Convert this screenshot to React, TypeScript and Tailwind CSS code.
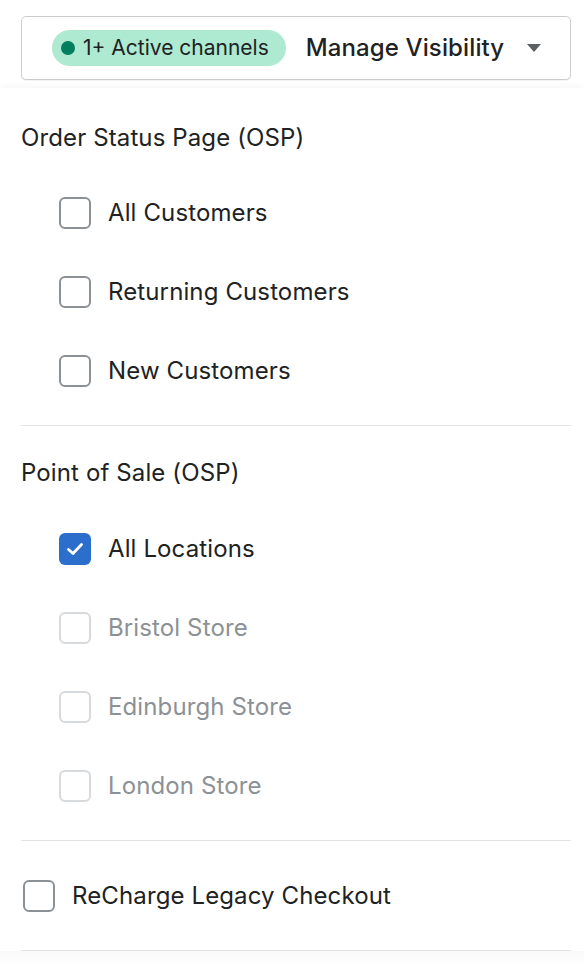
import React from "react";

type Option = { label: string; checked?: boolean; disabled?: boolean };

const ospOptions: Option[] = [
  { label: "All Customers" },
  { label: "Returning Customers" },
  { label: "New Customers" },
];

const posOptions: Option[] = [
  { label: "All Locations", checked: true },
  { label: "Bristol Store", disabled: true },
  { label: "Edinburgh Store", disabled: true },
  { label: "London Store", disabled: true },
];

function Checkbox({ checked, disabled }: { checked?: boolean; disabled?: boolean }) {
  if (checked) {
    return (
      <span className="flex h-[32px] w-[32px] shrink-0 items-center justify-center rounded-[6px] bg-[#2c6ecb]">
        <svg width="18" height="14" viewBox="0 0 18 14" fill="none">
          <path d="M2.5 7.5 L7 11.5 L15.5 2.5" stroke="white" strokeWidth="2.8" strokeLinecap="round" strokeLinejoin="round" />
        </svg>
      </span>
    );
  }
  return (
    <span
      className={
        disabled
          ? "h-[32px] w-[32px] shrink-0 rounded-[6px] border-2 border-[#d7dadd] bg-white"
          : "h-[32px] w-[32px] shrink-0 rounded-[6px] border-2 border-[#8c9196] bg-white"
      }
    />
  );
}

function Row({ label, checked, disabled }: Option) {
  return (
    <label className="flex h-[79px] items-center gap-[17px] pl-[38px]">
      <Checkbox checked={checked} disabled={disabled} />
      <span
        className={
          disabled
            ? "text-[24px] tracking-[0.005em] text-[#8c9196]"
            : "text-[24px] tracking-[0.005em] text-[#202223]"
        }
      >
        {label}
      </span>
    </label>
  );
}

export default function App() {
  return (
    <div className="min-h-[964px] bg-white text-[#202223]" style={{ fontFamily: "Inter, 'Noto Sans', sans-serif" }}>
      <div className="pl-[21px] pr-[13px] pt-[16px] pb-[8px]">
        <button className="flex h-[64px] w-full items-center rounded-[5px] border border-[#c9cccf] bg-white pl-[30px] pr-[29px] shadow-[0_1px_0_rgba(0,0,0,0.05)]">
          <span className="flex h-[36px] items-center gap-[8px] rounded-full bg-[#aee9d1] pl-[9px] pr-[17px]">
            <span className="h-[14px] w-[14px] rounded-full bg-[#007f5f]" />
            <span className="text-[21px] text-[#202223]">1+ Active channels</span>
          </span>
          <span className="ml-[20px] text-[24px] font-medium tracking-[0.005em] text-[#202223]">Manage Visibility</span>
          <span className="ml-auto">
            <svg width="14" height="8" viewBox="0 0 14 8">
              <path d="M0 0 H14 L7 8 Z" fill="#5c5f62" />
            </svg>
          </span>
        </button>
      </div>

      <div className="bg-white pl-[21px] pr-[13px] shadow-[0_-2px_6px_rgba(0,0,0,0.04)]">
        <div className="pt-[31px] text-[24px] leading-[38px] tracking-[0.005em]">Order Status Page (OSP)</div>
        <div className="pt-[16px] pb-[15px]">
          {ospOptions.map((o) => (
            <Row key={o.label} {...o} />
          ))}
        </div>
        <div className="h-px bg-[#e1e3e5]" />

        <div className="pt-[28px] text-[24px] leading-[38px] tracking-[0.005em]">Point of Sale (OSP)</div>
        <div className="pt-[17px] pb-[15px]">
          {posOptions.map((o) => (
            <Row key={o.label} {...o} />
          ))}
        </div>
        <div className="h-px bg-[#e1e3e5]" />

        <label className="flex h-[109px] items-center gap-[17px] pl-[2px]">
          <Checkbox />
          <span className="text-[24px] tracking-[0.005em]">ReCharge Legacy Checkout</span>
        </label>
        <div className="h-px bg-[#e1e3e5]" />
      </div>
      <div className="h-[14px] bg-gradient-to-b from-[#f9f9f9] to-white" />
    </div>
  );
}
